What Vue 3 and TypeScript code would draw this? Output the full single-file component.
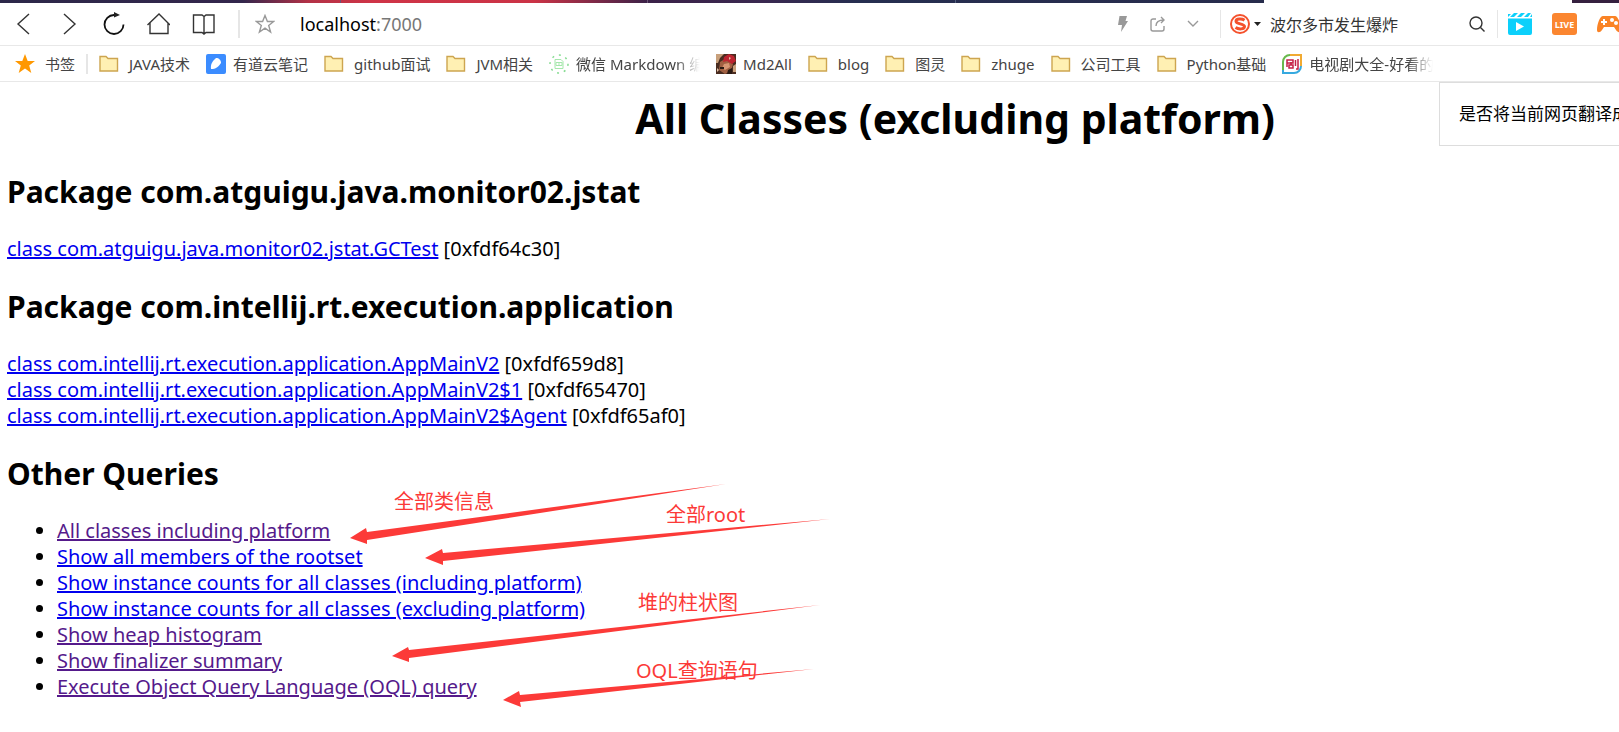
<script setup lang="ts">
type Icon = 'star' | 'folder' | 'note' | 'wechat' | 'photo' | 'tv'

interface Bookmark {
  label: string
  icon: Icon
  faded?: boolean
}

interface ClassRef {
  name: string
  address: string
}

interface PackageGroup {
  name: string
  classes: ClassRef[]
}

interface Query {
  label: string
  visited: boolean
}

interface Note {
  text: string
  x: number
  y: number
  arrow: string
}

const bookmarks: Bookmark[] = [
  { label: 'JAVA技术', icon: 'folder' },
  { label: '有道云笔记', icon: 'note' },
  { label: 'github面试', icon: 'folder' },
  { label: 'JVM相关', icon: 'folder' },
  { label: '微信 Markdown 编', icon: 'wechat', faded: true },
  { label: 'Md2All', icon: 'photo' },
  { label: 'blog', icon: 'folder' },
  { label: '图灵', icon: 'folder' },
  { label: 'zhuge', icon: 'folder' },
  { label: '公司工具', icon: 'folder' },
  { label: 'Python基础', icon: 'folder' },
  { label: '电视剧大全-好看的', icon: 'tv', faded: true },
]

const packages: PackageGroup[] = [
  {
    name: 'com.atguigu.java.monitor02.jstat',
    classes: [{ name: 'com.atguigu.java.monitor02.jstat.GCTest', address: '0xfdf64c30' }],
  },
  {
    name: 'com.intellij.rt.execution.application',
    classes: [
      { name: 'com.intellij.rt.execution.application.AppMainV2', address: '0xfdf659d8' },
      { name: 'com.intellij.rt.execution.application.AppMainV2$1', address: '0xfdf65470' },
      { name: 'com.intellij.rt.execution.application.AppMainV2$Agent', address: '0xfdf65af0' },
    ],
  },
]

const queries: Query[] = [
  { label: 'All classes including platform', visited: true },
  { label: 'Show all members of the rootset', visited: false },
  { label: 'Show instance counts for all classes (including platform)', visited: false },
  { label: 'Show instance counts for all classes (excluding platform)', visited: false },
  { label: 'Show heap histogram', visited: true },
  { label: 'Show finalizer summary', visited: true },
  { label: 'Execute Object Query Language (OQL) query', visited: true },
]

const notes: Note[] = [
  { text: '全部类信息', x: 394, y: 427, arrow: '350,456 366,446 367,450 726,402 367,458 367,462' },
  { text: '全部root', x: 666, y: 440, arrow: '425,476 442,467 443,471 830,437 443,479 443,483' },
  { text: '堆的柱状图', x: 638, y: 528, arrow: '392,574 408,565 409,568 820,523 409,576 409,580' },
  { text: 'OQL查询语句', x: 636, y: 596, arrow: '503,618 519,609 520,613 814,587 520,620 521,625' },
]
</script>

<template>
  <div class="browser">
    <div class="tabs"></div>

    <header class="toolbar">
      <nav class="nav" aria-label="Navigation">
        <button type="button" aria-label="Back">
          <svg width="24" height="24" viewBox="0 0 24 24"><path d="M18 2 7 12l11 10" /></svg>
        </button>
        <button type="button" aria-label="Forward">
          <svg width="24" height="24" viewBox="0 0 24 24"><path d="m8 2 11 10L8 22" /></svg>
        </button>
        <button type="button" aria-label="Reload">
          <svg width="24" height="24" viewBox="0 0 24 24">
            <path class="bold" d="M22.500 12.500a9.500 9.500 0 1 1-9.500-9.500h3" />
            <path class="solid" d="M13 0l6 3-6 2.500z" />
          </svg>
        </button>
        <button type="button" aria-label="Home">
          <svg width="24" height="24" viewBox="0 0 24 24"><path d="M1.500 13 13 2l11 11M4 11v10.500h18V11" /></svg>
        </button>
        <button type="button" aria-label="Reading list">
          <svg width="24" height="24" viewBox="0 0 24 24">
            <path d="M13 4.500 11 3H2.500v17.500H11l2 1.500 2-1.500h8V3h-8zM13 4.500v17" />
          </svg>
        </button>
      </nav>

      <div class="address">
        <button type="button" aria-label="Bookmark this page">
          <svg class="pale" width="20" height="20" viewBox="0 0 20 20">
            <path d="m10 1.500 2.400 6h6.300l-5 4 1.900 6.500L10 14.200 4.400 18l1.900-6.500-5-4h6.300z" />
          </svg>
        </button>
        <div class="url" role="textbox" aria-label="Address" contenteditable="true"><span>localhost</span><span class="port">:7000</span></div>
        <div class="tools">
          <button type="button" aria-label="Speed mode">
            <svg width="12" height="18" viewBox="0 0 12 18"><path class="bolt" d="M2.500 1H10L8.500 6H11L4 17l1-7H1z" /></svg>
          </button>
          <button type="button" aria-label="Share">
            <svg class="pale" width="16" height="16" viewBox="0 0 16 16">
              <path d="M6 3H3a2 2 0 0 0-2 2v8a2 2 0 0 0 2 2h9a2 2 0 0 0 2-2v-3M6 10c0-4 3-6 8-6M11 1l3 3-3 3" />
            </svg>
          </button>
          <button type="button" aria-label="More">
            <svg class="pale" width="12" height="8" viewBox="0 0 12 8"><path d="m1 1 5 5 5-5" /></svg>
          </button>
        </div>
      </div>

      <form class="search" role="search" @submit.prevent>
        <button type="button" class="engine" aria-label="Search engine">
          <svg width="32" height="22" viewBox="0 0 32 22">
            <circle class="ring" cx="11" cy="11" r="9" />
            <path class="ess" d="M15.500 7.200C13 5.500 7 5.500 7 8.300c0 3.200 8.500 2 8.500 5.200 0 3-6 3-9 1" />
            <path class="solid" d="M25 9h7l-3.500 4z" />
          </svg>
        </button>
        <input type="text" aria-label="Search" value="波尔多市发生爆炸" />
        <button type="submit" aria-label="Search the web">
          <svg width="16" height="16" viewBox="0 0 16 16"><circle cx="7" cy="7" r="6" /><path d="m11.500 11.500 4 4" /></svg>
        </button>
      </form>

      <div class="apps">
        <button type="button" aria-label="Video">
          <svg width="24" height="22" viewBox="0 0 24 22">
            <path class="cyan" d="M0 5.500h24V20a2 2 0 0 1-2 2H2a2 2 0 0 1-2-2zM0 1h3L0 4zM6 0h4L6 4H2zM13 0h4l-4 4H9zM20 0h3l-3 4h-4zM24 1v3h-2z" />
            <path class="white" d="m8 9 8 4.500L8 18z" />
          </svg>
        </button>
        <button type="button" class="live" aria-label="Live">LIVE</button>
        <button type="button" aria-label="Games">
          <svg width="24" height="20" viewBox="0 0 24 20">
            <path class="orange" d="M6 2h12c3 0 6 8 6 14 0 3-3 3-5 0l-2-3H7l-2 3c-2 3-5 3-5 0C0 10 3 2 6 2z" />
            <path class="plus" d="M7 5v6M4 8h6" />
            <circle class="white" cx="15" cy="6" r="2" /><circle class="white" cx="19" cy="9" r="2" />
          </svg>
        </button>
      </div>
    </header>

    <nav class="bookmarks" aria-label="Bookmarks">
      <a href="#" class="bookmark home">
        <svg width="20" height="20" viewBox="0 0 20 20">
          <path class="gold" d="m10 0 2.700 7H20l-5.800 4.500L16.300 19 10 14.600 3.700 19l2.100-7.500L0 7h7.300z" />
        </svg>
        <span>书签</span>
      </a>
      <a v-for="item in bookmarks" :key="item.label" href="#" class="bookmark" :class="[item.icon, { faded: item.faded }]">
        <svg v-if="item.icon === 'folder'" width="20" height="20" viewBox="0 0 20 20">
          <path class="folder-shape" d="M1 2.500h6l2 2h9.500v12.500H1z" />
        </svg>
        <svg v-else-if="item.icon === 'note'" width="20" height="20" viewBox="0 0 20 20">
          <rect class="blue" width="20" height="20" rx="2" />
          <path class="white" d="M5 15c-.5-4 .5-7 5-11 3 0 5 2 5 5-3 4-5 6-10 6z" />
        </svg>
        <svg v-else-if="item.icon === 'wechat'" width="20" height="20" viewBox="0 0 20 20">
          <circle class="dots" cx="10" cy="10" r="9" />
          <path class="mint" d="M6 5.500h6l2 2v7H6zM7 8.500h6v3H7zM10 8.500v3" />
        </svg>
        <svg v-else-if="item.icon === 'photo'" width="20" height="20" viewBox="0 0 20 20">
          <path fill="#4a2c20" d="M0 0h20v20H0z" />
          <path fill="#c8a07c" d="M0 0h8L4 4 2 9H0zM17 12l3-2v8h-3z" />
          <path fill="#a06042" d="M4 8l5-3 8 5-2 7-6 3-6-4z" />
          <path fill="#bd2430" d="m8 3 5-3 5 2 2 5-4 3-5-3-4 1z" />
          <path fill="#d69673" d="m8 10 5-1 1 4-5 3-3-2z" />
          <path fill="#2a1a14" d="M4 13h4v2H4zM12 16l4-2v6h-5z" />
          <path fill="#e7c4a7" d="m13 3 2 1-2 2zM1 14l2 2-2 2z" />
        </svg>
        <svg v-else width="20" height="20" viewBox="0 0 20 20">
          <path fill="none" stroke="#69b94c" stroke-width="2" d="M1 16V8c0-4 3-7 7-7" />
          <path fill="none" stroke="#f1aa32" stroke-width="2" d="M8 1h11v11" />
          <path fill="none" stroke="#36a9df" stroke-width="2" d="M19 12c0 4-3 7-7 7H1v-3" />
          <path fill="none" stroke="#c51f45" stroke-width="1.500" d="M5 6h6v3H5zv7M7 11h4v3H7zM9 8v3M13.500 6v6M16 5v10h-2" />
        </svg>
        <span>{{ item.label }}</span>
      </a>
    </nav>

    <div class="viewport">
      <main>
        <h1>All Classes (excluding platform)</h1>
        <section v-for="group in packages" :key="group.name">
          <h2>Package {{ group.name }}</h2>
          <div v-for="item in group.classes" :key="item.name" class="row">
            <a href="#">class {{ item.name }}</a> [{{ item.address }}]
          </div>
        </section>
        <section>
          <h2>Other Queries</h2>
          <ul>
            <li v-for="query in queries" :key="query.label">
              <a href="#" :class="{ visited: query.visited }">{{ query.label }}</a>
            </li>
          </ul>
        </section>
      </main>

      <svg class="notes" width="860" height="650" viewBox="0 0 860 650">
        <g v-for="note in notes" :key="note.text">
          <polygon :points="note.arrow" />
          <text :x="note.x" :y="note.y">{{ note.text }}</text>
        </g>
      </svg>

      <aside class="translate">是否将当前网页翻译成</aside>
    </div>
  </div>
</template>

<style>
body {
  margin: 0;
  background: #fff;
}
</style>

<style scoped>
.browser {
  min-height: 100vh;
  overflow: hidden;
  color: #000;
  font-family: "Noto Sans", "Noto Sans CJK SC", sans-serif;
}

.tabs {
  height: 3px;
  background:
    linear-gradient(#6c5474, #6c5474) 21% 0 / 1px 3px no-repeat,
    linear-gradient(#6c5474, #6c5474) 40% 0 / 1px 3px no-repeat,
    linear-gradient(#53607c, #53607c) 59% 0 / 1px 3px no-repeat,
    linear-gradient(90deg, #2c2749 0, #33264c 15%, #b23146 19%, #cf3447 23%, #cb3346 33%, #3b2148 40%, #3a2850 47%, #262e50 53%, #272c4c 78.1%, #fff 78.1%, #fff 97.1%, #35203f 97.1%);
}

button {
  display: flex;
  align-items: center;
  justify-content: center;
  padding: 0;
  border: 0;
  background: none;
  font-family: inherit;
}

svg {
  display: block;
  flex: none;
}

.toolbar {
  display: flex;
  align-items: center;
  height: 42px;
  border-bottom: 1px solid #e8e8e8;
}

.toolbar svg path,
.toolbar svg circle {
  fill: none;
  stroke: #333;
  stroke-width: 1.4;
}

.toolbar svg .bold {
  stroke: #111;
  stroke-width: 1.8;
}

.toolbar svg .solid {
  fill: #222;
  stroke: none;
}

.toolbar svg.pale path {
  stroke: #999;
}

.toolbar svg .bolt {
  fill: #999;
  stroke: none;
}

.nav {
  display: flex;
  gap: 21px;
  padding: 0 23px 0 11px;
}

.address {
  display: flex;
  flex: 1;
  align-items: center;
  height: 28px;
  padding: 0 21px 0 15px;
  border-left: 2px solid #e6e6e6;
}

.url {
  flex: 1;
  padding-left: 25px;
  font-size: 18px;
  line-height: 28px;
  outline: none;
}

.port {
  color: #777;
}

.tools {
  display: flex;
  align-items: center;
  gap: 21px;
}

.search {
  display: flex;
  align-items: center;
  width: 277px;
  height: 28px;
  box-sizing: border-box;
  padding: 0 12px 0 8px;
  border-left: 1px solid #e6e6e6;
}

.search input {
  flex: 1;
  min-width: 0;
  padding: 0 0 0 9px;
  border: 0;
  outline: 0;
  color: #333;
  font-family: inherit;
  font-size: 16px;
}

.toolbar svg .ring {
  stroke: #f4512c;
  stroke-width: 2;
}

.toolbar svg .ess {
  stroke: #f4512c;
  stroke-width: 3;
}

.apps {
  display: flex;
  align-items: center;
  gap: 20px;
  height: 28px;
  width: 122px;
  box-sizing: border-box;
  padding-left: 10px;
  border-left: 1px solid #e6e6e6;
}

.apps button {
  flex: none;
}

.apps svg .cyan {
  fill: #0cd0fb;
  stroke: none;
}

.apps svg .orange {
  fill: #fa8326;
  stroke: none;
}

.apps svg .white {
  fill: #fff;
  stroke: none;
}

.apps svg .plus {
  stroke: #fff;
  stroke-width: 2;
}

.apps .live {
  width: 25px;
  height: 22px;
  border-radius: 3px;
  background: #fb8630;
  color: #fff;
  font-size: 9px;
  font-weight: 700;
}

.bookmarks {
  display: flex;
  align-items: center;
  gap: 16px;
  height: 35px;
  padding-left: 15px;
  border-bottom: 1px solid #e8e8e8;
}

.bookmark {
  display: flex;
  flex: none;
  align-items: center;
  gap: 10px;
  color: #444;
  font-size: 15px;
  line-height: 20px;
  text-decoration: none;
  white-space: nowrap;
}

.home {
  padding-right: 11px;
  border-right: 2px solid #e6e6e6;
  margin-right: -5px;
}

.note,
.wechat,
.photo,
.tv {
  gap: 7px;
}

.faded span {
  width: 124px;
  overflow: hidden;
  mask-image: linear-gradient(90deg, #000 80%, transparent);
}

.gold {
  fill: #ff9800;
}

.folder-shape {
  fill: #fff0b3;
  stroke: #cda550;
  stroke-width: 1.4;
}

.blue {
  fill: #3b8cff;
}

.white {
  fill: #fff;
}

.dots {
  fill: none;
  stroke: #86dc92;
  stroke-width: 1.5;
  stroke-dasharray: 2 5;
}

.mint {
  fill: none;
  stroke: #a5e7ac;
}

.viewport {
  position: relative;
}

main {
  display: flow-root;
  padding-left: 7px;
  font-size: 20px;
  line-height: 26px;
}

h1 {
  width: calc(118% + 8px);
  margin: 9px 0 27px -7px;
  font-size: 41px;
  line-height: 54px;
  text-align: center;
}

h2 {
  margin: 25px 0 24px;
  font-size: 30px;
  line-height: 40px;
}

main a {
  color: #00e;
  text-decoration-thickness: 2px;
}

main a.visited {
  color: #551a8b;
}

ul {
  margin: 0;
  padding-left: 50px;
}

.notes {
  position: absolute;
  top: 0;
  left: 0;
  fill: #fc3a38;
  font-size: 20px;
  pointer-events: none;
}

.translate {
  position: absolute;
  top: 0;
  right: 0;
  width: 160px;
  padding: 0 0 0 19px;
  border: 1px solid #ddd;
  border-right: 0;
  background: #fff;
  overflow: hidden;
  font-size: 17px;
  line-height: 62px;
  white-space: nowrap;
}
</style>
